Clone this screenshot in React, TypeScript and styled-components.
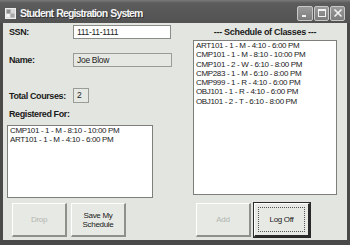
import React from "react";
import styled, { createGlobalStyle } from "styled-components";

const Global = createGlobalStyle`
  html, body { margin: 0; padding: 0; background: #ffffff; }
  body { font-family: "Liberation Sans", Arial, sans-serif; }
`;

const Window = styled.div`
  width: 350px;
  height: 245px;
  display: flex;
  flex-direction: column;
  background: #4a4a4a;
  font-family: "Liberation Sans", Arial, sans-serif;
  color: #111;
  overflow: hidden;
`;

const TitleBar = styled.div`
  height: 23px;
  flex: none;
  display: flex;
  align-items: center;
  padding: 3px 4px 0 5px;
  box-sizing: border-box;
  background: linear-gradient(#7a7a7a 0px, #5c5c5c 3px, #525252 100%);
`;

const TitleText = styled.span`
  flex: 1;
  margin-left: 4px;
  color: #f4f4f4;
  font-weight: bold;
  font-size: 10.5px;
  letter-spacing: -0.85px;
  word-spacing: 1px;
  text-shadow: 1px 1px 0 #333;
`;

const CaptionButtons = styled.div`
  display: flex;
  gap: 1px;
  margin-right: 1px;
`;

const CaptionButton = styled.div<{ $w?: number }>`
  width: ${(p) => p.$w ?? 15}px;
  height: 15px;
  box-sizing: border-box;
  border: 1px solid #c8c8c8;
  border-radius: 2px;
  background: linear-gradient(#9a9a9a, #7c7c7c);
  display: flex;
  align-items: center;
  justify-content: center;
`;

const Body = styled.div`
  flex: 1;
  margin: 0 3px 5px 3px;
  background: #e3e5e0;
  display: grid;
  grid-template-columns: 187px 1fr;
`;

const LeftColumn = styled.div`
  display: flex;
  flex-direction: column;
  padding-left: 4px;
`;

const RightColumn = styled.div`
  display: flex;
  flex-direction: column;
  padding-left: 3px;
`;

const FieldRow = styled.div<{ $top: number; $h: number }>`
  display: grid;
  grid-template-columns: 66px auto;
  align-items: center;
  margin-top: ${(p) => p.$top}px;
  height: ${(p) => p.$h}px;
`;

const Label = styled.span`
  margin-left: 2px;
  font-weight: bold;
  font-size: 9px;
  letter-spacing: -0.4px;
  color: #1a1a1a;
`;

const SectionLabel = styled(Label)<{ $top: number }>`
  display: block;
  margin-top: ${(p) => p.$top}px;
  height: 10px;
  line-height: 10px;
`;

const TextBox = styled.div<{ $w: number; $h: number; $disabled?: boolean }>`
  width: ${(p) => p.$w}px;
  height: ${(p) => p.$h}px;
  box-sizing: border-box;
  border: 1px solid ${(p) => (p.$disabled ? "#9a9c98" : "#8a8c88")};
  background: ${(p) => (p.$disabled ? "#e6e8e3" : "#ffffff")};
  padding-left: 3px;
  font-size: 8.5px;
  letter-spacing: -0.3px;
  line-height: ${(p) => p.$h - 2}px;
  color: #222;
`;

const ListBox = styled.div<{ $top: number; $w: number; $h: number }>`
  margin-top: ${(p) => p.$top}px;
  width: ${(p) => p.$w}px;
  height: ${(p) => p.$h}px;
  box-sizing: border-box;
  border: 1px solid #7d7f7b;
  background: #ffffff;
  padding: 0px 2px;
`;

const ListItem = styled.div`
  font-size: 8px;
  letter-spacing: -0.35px;
  line-height: 9.3px;
  color: #1a1a1a;
  white-space: nowrap;
`;

const Heading = styled.div<{ $w: number }>`
  width: ${(p) => p.$w}px;
  margin-top: 4px;
  height: 10px;
  line-height: 10px;
  text-align: center;
  font-weight: bold;
  font-size: 9px;
  letter-spacing: -0.3px;
  color: #1a1a1a;
`;

const ButtonRow = styled.div<{ $left: number; $gap: number }>`
  display: flex;
  gap: ${(p) => p.$gap}px;
  margin-top: auto;
  margin-bottom: 3px;
  padding-left: ${(p) => p.$left}px;
`;

const Button = styled.div<{ $w: number; $disabled?: boolean; $default?: boolean }>`
  width: ${(p) => p.$w}px;
  height: 34px;
  box-sizing: border-box;
  display: flex;
  align-items: center;
  justify-content: center;
  text-align: center;
  font-size: 8px;
  letter-spacing: -0.3px;
  line-height: 9px;
  color: ${(p) => (p.$disabled ? "#b3b6b1" : "#1a1a1a")};
  background: #e7e9e4;
  border-top: 1px solid #ffffff;
  border-left: 1px solid #ffffff;
  border-right: 2px solid ${(p) => (p.$default ? "#2a2a2a" : "#8e908c")};
  border-bottom: 2px solid ${(p) => (p.$default ? "#2a2a2a" : "#8e908c")};
  ${(p) =>
    p.$default &&
    `
    outline: 1px solid #2a2a2a;
    outline-offset: 0px;
  `}
`;

const FocusRing = styled.span`
  display: flex;
  align-items: center;
  justify-content: center;
  width: calc(100% - 6px);
  height: calc(100% - 6px);
  border: 1px dotted #555;
  box-sizing: border-box;
`;

const AppIcon = () => (
  <svg width="11" height="11" viewBox="0 0 11 11">
    <rect x="0.5" y="0.5" width="10" height="10" fill="#d8d8d8" stroke="#eeeeee" />
    <rect x="1.5" y="1.5" width="4" height="4" fill="#8d8d8d" />
    <rect x="5.5" y="5.5" width="4" height="4" fill="#a8a8a8" />
    <rect x="1.5" y="6" width="3" height="3" fill="#f5f5f5" />
  </svg>
);

const rightItems = [
  "ART101 - 1 - M - 4:10 - 6:00 PM",
  "CMP101 - 1 - M - 8:10 - 10:00 PM",
  "CMP101 - 2 - W - 6:10 - 8:00 PM",
  "CMP283 - 1 - M - 6:10 - 8:00 PM",
  "CMP999 - 1 - R - 4:10 - 6:00 PM",
  "OBJ101 - 1 - R - 4:10 - 6:00 PM",
  "OBJ101 - 2 - T - 6:10 - 8:00 PM",
];

const leftItems = ["CMP101 - 1 - M - 8:10 - 10:00 PM", "ART101 - 1 - M - 4:10 - 6:00 PM"];

export default function App() {
  return (
    <>
      <Global />
      <Window>
        <TitleBar>
          <AppIcon />
          <TitleText>Student Registration System</TitleText>
          <CaptionButtons>
            <CaptionButton $w={16}>
              <svg width="10" height="10" viewBox="0 0 10 10">
                <rect x="2" y="7" width="4" height="2" fill="#f2f2f2" />
              </svg>
            </CaptionButton>
            <CaptionButton>
              <svg width="10" height="10" viewBox="0 0 10 10">
                <rect x="1.5" y="1.5" width="7" height="7" fill="none" stroke="#f2f2f2" />
                <rect x="1" y="1" width="8" height="2" fill="#f2f2f2" />
              </svg>
            </CaptionButton>
            <CaptionButton>
              <svg width="10" height="10" viewBox="0 0 10 10">
                <path d="M1.5 1.5 L8.5 8.5 M8.5 1.5 L1.5 8.5" stroke="#f2f2f2" strokeWidth="1.6" />
              </svg>
            </CaptionButton>
          </CaptionButtons>
        </TitleBar>
        <Body>
          <LeftColumn>
            <FieldRow $top={2} $h={14}>
              <Label>SSN:</Label>
              <TextBox $w={98} $h={14}>111-11-1111</TextBox>
            </FieldRow>
            <FieldRow $top={14} $h={14}>
              <Label>Name:</Label>
              <TextBox $w={99} $h={14} $disabled>
                Joe Blow
              </TextBox>
            </FieldRow>
            <FieldRow $top={21} $h={15}>
              <Label>Total Courses:</Label>
              <TextBox $w={16} $h={15} $disabled>
                2
              </TextBox>
            </FieldRow>
            <SectionLabel $top={6}>Registered For:</SectionLabel>
            <ListBox $top={6} $w={146} $h={73}>
              {leftItems.map((t) => (
                <ListItem key={t}>{t}</ListItem>
              ))}
            </ListBox>
            <ButtonRow $left={5} $gap={4}>
              <Button $w={55} $disabled>
                Drop
              </Button>
              <Button $w={55}>
                Save My
                <br />
                Schedule
              </Button>
            </ButtonRow>
          </LeftColumn>
          <RightColumn>
            <Heading $w={144}>--- Schedule of Classes ---</Heading>
            <ListBox $top={3} $w={144} $h={155}>
              {rightItems.map((t) => (
                <ListItem key={t}>{t}</ListItem>
              ))}
            </ListBox>
            <ButtonRow $left={3} $gap={3}>
              <Button $w={55} $disabled>
                Add
              </Button>
              <Button $w={56} $default>
                <FocusRing>Log Off</FocusRing>
              </Button>
            </ButtonRow>
          </RightColumn>
        </Body>
      </Window>
    </>
  );
}
